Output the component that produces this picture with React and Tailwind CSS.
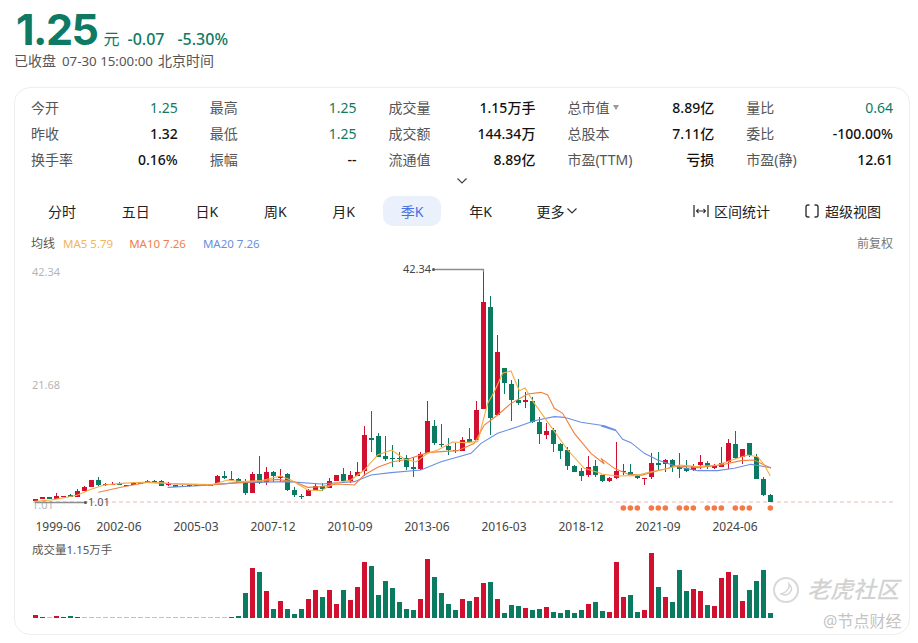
import React from "react";

const FONT = "'Noto Sans','Noto Sans CJK SC',sans-serif";
const RED = "#d0102e";
const GREEN = "#0a7a61";

const z3 = [
  [298,304,298,304,1],[292,298,292,298,1],[292,296,292,296,0],[288,296,280,296,1],[287,292,287,292,1],
  [285,290,283,290,0],[272,290,268,290,1],[260,272,258,272,1],[241,261,241,261,1],[240,254,232,257,0],
  [253,256,250,258,1],[251,256,247,256,1],[251,253,245,255,0],[254,258,254,258,1],[250,255,245,255,1],
  [249,253,247,253,1],[243,248,241,248,1],[243,246,241,247,0],[243,257,241,259,0],[250,255,245,258,1],
  [254,262,254,262,0],[257,259,255,262,1],[256,258,254,260,1],[255,257,254,259,1],[255,257,253,259,1],
  [254,256,252,258,1],[228,250,226,250,1],[229,234,213,236,0],[237,239,212,242,0],[236,246,234,246,0],
  [248,278,238,286,0],[222,278,215,278,1],[222,250,168,252,0],[216,245,200,254,1],[215,228,212,246,0],
  [228,235,208,246,1],[222,270,219,274,0],[270,286,262,290,0],[288,290,282,298,0],[270,288,268,288,1],
  [258,270,252,270,1],
].map(a => [400 + a[0]/3, 400 + a[1]/3, 400 + a[2]/3, 400 + a[3]/3, a[4]]);

const z4 = [
  [678,688,670,692,0],[662,685,655,685,1],[646,662,646,662,1],[643,663,625,665,0],[646,662,632,670,1],
  [636,648,607,648,1],[526,634,497,648,1],[534,540,453,575,0],[529,590,518,592,0],[589,596,528,604,0],
  [594,597,555,620,0],[594,597,575,606,0],[593,622,586,630,0],[622,626,590,652,0],[581,627,575,630,1],
  [484,580,423,580,1],[499,550,480,555,0],[551,556,492,560,0],[557,570,535,585,0],[569,574,548,580,0],
  [539,573,532,573,1],[538,546,503,550,0],[450,540,423,540,1],[126,447,30,447,1],[140,474,108,525,0],
  [276,465,225,465,1],[324,369,324,402,0],[371,420,360,483,0],[420,430,358,435,0],[420,426,396,444,1],
  [422,485,412,490,0],[485,523,470,553,0],[513,524,490,537,1],[510,552,505,575,0],[552,572,548,598,0],
  [570,618,560,630,0],[617,635,615,637,0],[634,647,625,664,0],[620,645,587,652,1],[618,645,600,652,0],
].map(a => [260 + a[0]/3, 260 + a[1]/3, 260 + a[2]/3, 260 + a[3]/3, a[4]]);

const z5 = [
  [226,243,224,245,0],[235,242,232,245,1],[214,234,126,236,1],[212,217,193,225,1],[216,224,193,226,0],
  [227,235,226,237,0],[233,238,233,254,1],[188,232,160,236,1],[188,194,156,212,0],[181,193,178,217,1],
  [181,200,178,216,0],[202,207,160,233,0],[204,212,181,216,0],[199,210,192,214,1],[186,196,164,206,1],
  [188,200,182,208,0],[196,203,193,206,1],[188,200,141,200,1],[129,185,118,208,1],[132,174,92,178,0],
  [148,172,148,192,1],[130,166,128,170,0],[170,236,162,237,0],[236,284,232,288,0],[284,305,282,305,0],
].map(a => [400 + a[0]/3, 400 + a[1]/3, 400 + a[2]/3, 400 + a[3]/3, a[4]]);

const candles = [...z3, ...z4, ...z5];

const pts3 = a => a.map(p => `${20 + p[0]/3},${400 + p[1]/3}`);
const pts4 = a => a.map(p => `${320 + p[0]/3},${260 + p[1]/3}`);
const pts5 = a => a.map(p => `${600 + p[0]/3},${400 + p[1]/3}`);

const ma5 = [
  ...pts3([[40,304],[90,300],[130,293],[170,285],[210,268],[250,255],[300,250],[380,246],[440,250],[570,255],[620,240],[660,245],[720,242],[778,228],[810,240],[860,270]]),
  ...pts4([[0,692],[40,670],[90,660],[130,630],[170,585],[212,570],[250,597],[285,606],[320,580],[350,570],[395,546],[430,548],[470,545],[500,430],[520,395],[545,340],[570,333],[595,392],[612,384],[640,430],[690,500],[740,570],[790,625],[840,640]]),
  ...pts5([[0,222],[50,228],[100,227],[150,215],[190,208],[235,195],[290,200],[350,195],[400,178],[440,165],[470,170],[490,195],[508,228]]),
].join(" ");
const ma10 = [
  ...pts3([[232,277],[300,262],[380,247],[470,252],[570,254],[700,245],[770,238],[820,245],[860,262]]),
  ...pts4([[0,680],[50,672],[100,675],[130,645],[170,622],[215,605],[260,598],[320,578],[360,575],[410,572],[460,550],[490,495],[530,465],[570,430],[620,402],[660,397],[680,405],[700,445],[725,460],[760,520],[810,580],[850,612]]),
  ...pts5([[0,175],[40,205],[80,222],[120,226],[170,212],[230,198],[290,203],[360,195],[420,182],[460,180],[510,205]]),
].join(" ");
const ma20 = [
  ...pts3([[440,262],[570,255],[650,248],[800,245]]),
  ...pts4([[0,672],[100,665],[150,645],[210,638],[300,630],[360,605],[450,580],[480,550],[530,520],[590,500],[640,482],[700,470],[730,472],[780,487],[850,497],[885,510]]),
  ...pts5([[0,78],[45,92],[65,118],[90,128],[130,160],[170,180],[230,200],[290,212],[350,212],[400,205],[450,193],[510,203]]),
].join(" ");

const vol = [
  [256,1],[261,1],[262,0],[259,1],[261,1],[259,0],[260,1],[262,1],[262,1],[262,0],[262,0],[262,1],[262,0],[262,1],[262,1],[262,1],[262,0],[262,0],[262,0],[262,1],[262,1],[262,1],[262,1],[262,1],[262,0],[262,0],[262,1],[262,0],
  [260,0],[257,0],[188,0],[114,1],[126,0],[184,1],[236,0],[212,1],[238,0],[252,0],[238,0],[207,1],[181,1],[201,0],[180,1],[222,1],[180,0],[211,1],[170,1],[96,1],[107,0],[196,0],[154,0],[175,0],[217,0],[237,0],[240,0],[207,1],[88,1],[142,0],[189,0],[223,0],[241,0],[208,1],[214,0],
  [200,1],[159,1],[157,0],[206,1],[250,0],[225,0],[227,0],[234,1],[239,0],[236,0],[232,1],[246,0],[248,0],[241,0],[249,0],[240,0],[222,1],[216,0],[243,0],[247,1],[97,1],[201,1],[196,0],[245,0],[241,1],[69,1],[172,0],[202,1],[217,0],[121,0],[183,0],[177,1],[183,1],[224,0],[227,1],[145,1],[126,1],[135,0],[214,1],[180,0],[153,0],[120,0],[250,0],
];

const xLabels = [
  ["1999-06",57],["2002-06",118],["2005-03",195],["2007-12",272],["2010-09",349],
  ["2013-06",426],["2016-03",503],["2018-12",580],["2021-09",657],["2024-06",734],
];
const dots = [67,88,109,151,172,193,235,256,277,319,340,361,403,424,445,508].map(x => 600 + x/3);

const stats = [
  [["今开","1.25",1],["最高","1.25",1],["成交量","1.15万手"],["总市值","8.89亿",0,1],["量比","0.64",1]],
  [["昨收","1.32"],["最低","1.25",1],["成交额","144.34万"],["总股本","7.11亿"],["委比","-100.00%"]],
  [["换手率","0.16%"],["振幅","--"],["流通值","8.89亿"],["市盈(TTM)","亏损"],["市盈(静)","12.61"]],
];
const tabs = ["分时","五日","日K","周K","月K","季K","年K"];

function Chart() {
  return (
    <svg viewBox="14 254 894 379" width="894" height="379" className="block" style={{ fontFamily: FONT }}>
      <line x1="34" y1="502" x2="893" y2="502" stroke="#f4b6b6" strokeWidth="1" strokeDasharray="4 3" />
      <text x="31" y="276" fontSize="11" fill="#b5b5b5">42.34</text>
      <text x="31" y="389" fontSize="11" fill="#b5b5b5">21.68</text>
      <text x="31" y="509" fontSize="11" fill="#b5b5b5">1.01</text>

      {candles.map((c, i) => {
        const col = c[4] ? RED : GREEN;
        const x = 34 + 7 * i;
        return (
          <g key={i} shapeRendering="crispEdges">
            <rect x={x} y={c[2]} width="1" height={Math.max(c[3] - c[2], 1)} fill={col} />
            <rect x={x - 2} y={c[0]} width="5" height={Math.max(c[1] - c[0], 1)} fill={col} />
          </g>
        );
      })}

      <polyline points={ma20} fill="none" stroke="#6b8fe3" strokeWidth="1.1" />
      <polyline points={ma10} fill="none" stroke="#f0803f" strokeWidth="1.1" />
      <polyline points={ma5} fill="none" stroke="#f4ad45" strokeWidth="1.1" />

      <polyline points="34,502.5 84,502.5" fill="none" stroke="#8d8d8d" strokeWidth="1.6" />
      <circle cx="84.5" cy="502.5" r="1.5" fill="#555" />
      <text x="87" y="506" fontSize="11" fill="#555">1.01</text>
      <polyline points="432,269.5 482.5,269.5 482.5,272" fill="none" stroke="#8d8d8d" strokeWidth="1.3" />
      <circle cx="432.5" cy="269.5" r="1.5" fill="#555" />
      <text x="402" y="273" fontSize="11" fill="#444">42.34</text>

      {dots.map((x, i) => <circle key={i} cx={x} cy="508" r="2.8" fill="#f47a45" />)}

      {xLabels.map(([t, x]) => (
        <text key={t} x={x} y="531" fontSize="12" fill="#444" textAnchor="middle">{t}</text>
      ))}

      <text x="31" y="554" fontSize="11.5" fill="#555">成交量1.15万手</text>
      {vol.map((v, i) => {
        const top = 530 + v[0] / 3;
        const pale = v[0] === 262;
        return (
          <rect key={i} shapeRendering="crispEdges" x={32 + 7 * i} y={top} width="5" height={618 - top}
            fill={v[1] ? RED : GREEN} opacity={pale ? 0.35 : 1} />
        );
      })}
    </svg>
  );
}

export default function App() {
  return (
    <div className="w-[918px] h-[643px] bg-white overflow-hidden" style={{ fontFamily: FONT }}>
      <div className="pl-[14px] pt-[9px] h-[87px]">
        <div className="flex items-baseline h-[41px]">
          <span className="text-[43px] leading-[41px] font-bold text-[#0f7a63] tracking-[-1.5px] ml-[2px]" style={{ fontFamily: "Inter,sans-serif" }}>1.25</span>
          <span className="text-[16px] text-[#0f7a63] ml-[6px]">元</span>
          <span className="text-[16px] font-medium text-[#0f7a63] ml-[8px]">-0.07</span>
          <span className="text-[16px] font-medium text-[#0f7a63] ml-[13px]">-5.30%</span>
        </div>
        <div className="text-[14px] leading-[18px] text-[#555] mt-[2px]">
          已收盘<span className="ml-[6px] text-[13.3px]">07-30 15:00:00</span><span className="ml-[5px]">北京时间</span>
        </div>
      </div>

      <div className="relative ml-[14px] w-[896px] h-[548px] border border-[#eeeeee] rounded-[16px]">
        <div className="pl-[16px] pr-[16px] pt-[6px]">
          {stats.map((row, r) => (
            <div key={r} className="grid grid-cols-5 gap-x-[32px] h-[26px] items-center text-[14px]">
              {row.map(([l, v, g, tri]) => (
                <div key={l} className="flex justify-between items-center">
                  <span className="text-[#555] flex items-center">
                    {l}
                    {tri ? <span className="ml-[4px] w-0 h-0 border-l-[3px] border-r-[3px] border-t-[5px] border-l-transparent border-r-transparent border-t-[#999]" /> : null}
                  </span>
                  <span className={g ? "text-[#0f7a63]" : "text-[#111] font-medium"}>{v}</span>
                </div>
              ))}
            </div>
          ))}
        </div>

        <div className="flex justify-center h-[15px] mt-[1px] pt-[3px]">
          <svg width="12" height="8" viewBox="0 0 12 8" className="mt-[1px] mr-[1px]">
            <path d="M1.5 1.5 L6 6 L10.5 1.5" fill="none" stroke="#444" strokeWidth="1.2" />
          </svg>
        </div>

        <div className="flex items-center h-[30px] mt-[8px] pl-[15px] pr-[28px] text-[14px] text-[#222]">
          <div className="flex items-center gap-x-[9.75px]">
            {tabs.map(t => (
              <div key={t} className={t === "季K"
                ? "px-[18px] h-[30px] flex items-center rounded-[10px] bg-[#eaf0fc] text-[#4a6fe0]"
                : "px-[18px] h-[30px] flex items-center"}>{t}</div>
            ))}
            <div className="pl-[17px] flex items-center">
              更多
              <svg width="12" height="8" viewBox="0 0 12 8" className="ml-[1px]">
                <path d="M1.5 1.5 L6 6 L10.5 1.5" fill="none" stroke="#333" strokeWidth="1.2" />
              </svg>
            </div>
          </div>
          <div className="ml-auto flex items-center">
            <svg width="16" height="14" viewBox="0 0 16 14" className="mr-[5px]">
              <path d="M1 1V13M15 1V13" stroke="#333" strokeWidth="1.3" fill="none" />
              <path d="M3.5 7H12.5M5.5 5L3.5 7L5.5 9M10.5 5L12.5 7L10.5 9" stroke="#333" strokeWidth="1.1" fill="none" />
            </svg>
            <span>区间统计</span>
            <svg width="14" height="14" viewBox="0 0 14 14" className="ml-[35px] mr-[6px]">
              <path d="M4.5 1H3A2 2 0 0 0 1 3V11A2 2 0 0 0 3 13H4.5M9.5 1H11A2 2 0 0 1 13 3V11A2 2 0 0 1 11 13H9.5" stroke="#333" strokeWidth="1.4" fill="none" />
            </svg>
            <span>超级视图</span>
          </div>
        </div>

        <div className="flex items-center h-[16px] mt-[10px] pl-[16px] pr-[16px] text-[11.5px]">
          <span className="text-[#555] text-[12px]">均线</span>
          <span className="text-[#f5b45e] ml-[8px]">MA5 5.79</span>
          <span className="text-[#f08050] ml-[16px]">MA10 7.26</span>
          <span className="text-[#6a8ee0] ml-[17px]">MA20 7.26</span>
          <span className="ml-auto text-[#777] text-[12px]">前复权</span>
        </div>

        <div className="mt-[2px]">
          <Chart />
        </div>

        <div className="absolute left-[758px] top-[489px] w-[26px] h-[26px] rounded-full border-2 border-[#d9d9d9] flex items-center justify-center">
          <svg width="16" height="16" viewBox="0 0 16 16">
            <path d="M11 2C12 6 8 11 3 12C6 14 11 13 13 9C14 7 13 4 11 2Z" fill="none" stroke="#d4d4d4" strokeWidth="1.4" />
          </svg>
        </div>
        <div className="absolute left-[792px] top-[485px] text-[23px] leading-[32px] font-medium text-[#d2d2d2] italic whitespace-nowrap">老虎社区</div>
        <div className="absolute left-[808px] top-[523px] text-[16px] leading-[20px] text-[#c4c4c4] whitespace-nowrap">@节点财经</div>
      </div>
    </div>
  );
}
